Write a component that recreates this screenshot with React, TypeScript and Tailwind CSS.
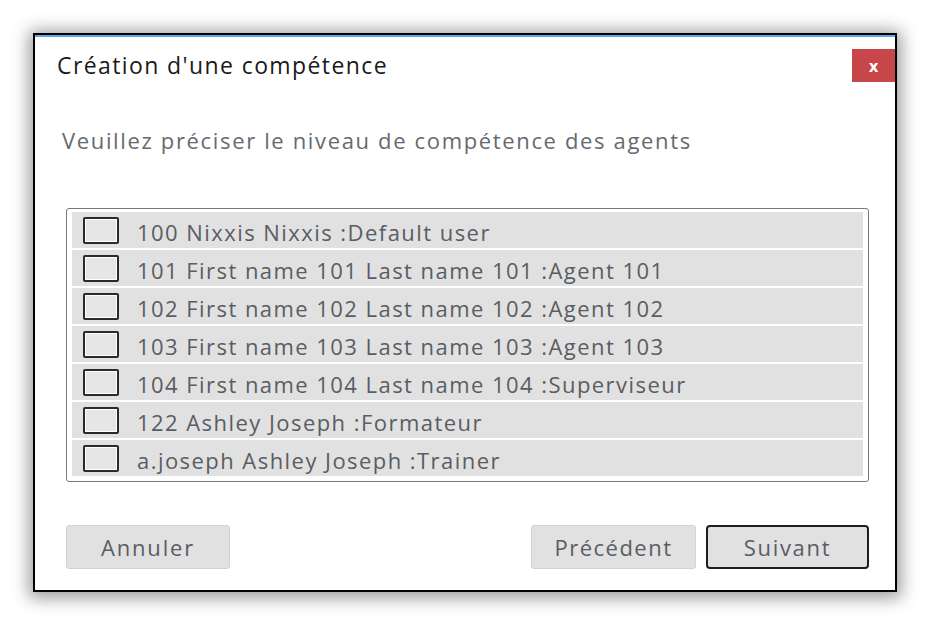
const rows = [
  "100 Nixxis Nixxis :Default user",
  "101 First name 101 Last name 101 :Agent 101",
  "102 First name 102 Last name 102 :Agent 102",
  "103 First name 103 Last name 103 :Agent 103",
  "104 First name 104 Last name 104 :Superviseur",
  "122 Ashley Joseph :Formateur",
  "a.joseph Ashley Joseph :Trainer",
];

const App = () => {
  return (
    <div className="w-[931px] h-[626px] bg-white pt-[33px] pl-[33px] font-['Open_Sans',sans-serif]">
      <div className="w-[864px] h-[559px] border-2 border-black bg-white shadow-[0_2px_16px_4px_rgba(0,0,0,0.4)] flex flex-col">
        <div className="h-[2px] bg-[#5fa6e6]" />

        <div className="mt-[12px] h-[33px] flex items-center justify-between">
          <h1 className="pl-[22px] text-[23px] tracking-[1.4px] text-[#1a1a1a]">Création d'une compétence</h1>
          <button className="w-[43px] h-[33px] bg-[#c74649] text-white text-[16px] font-bold flex items-center justify-center leading-none">
            x
          </button>
        </div>

        <p className="mt-[45px] pl-[27px] h-[26px] leading-[26px] text-[22px] tracking-[1.65px] text-[#666a70]">
          Veuillez préciser le niveau de compétence des agents
        </p>

        <div className="mt-[55px] ml-[31px] w-[803px] h-[274px] border border-[#7a7a7a] rounded-[3px] px-[5px] pt-[3px] flex flex-col gap-[2px]">
          {rows.map((r) => (
            <div key={r} className="h-[36px] bg-[#e1e1e1] flex items-center pl-[11px] gap-[18px]">
              <div className="w-[36px] h-[27px] shrink-0 border-2 border-[#2a2a2a] rounded-[2px] bg-[#e6e6e6] shadow-[inset_0_0_0_1px_#ffffff]" />
              <span className="pt-[3px] text-[22px] leading-[30px] tracking-[1.45px] text-[#5a5d63] whitespace-nowrap">{r}</span>
            </div>
          ))}
        </div>

        <div className="mt-[43px] ml-[31px] w-[803px] flex items-center">
          <button className="w-[164px] h-[44px] bg-[#e1e1e1] border border-[#d2d2d2] rounded-[3px] text-[22px] tracking-[1.8px] text-[#5a5d63]">
            Annuler
          </button>
          <button className="ml-auto w-[165px] h-[44px] bg-[#e1e1e1] border border-[#d2d2d2] rounded-[3px] text-[22px] tracking-[1.5px] text-[#5a5d63]">
            Précédent
          </button>
          <button className="ml-[10px] w-[163px] h-[44px] bg-[#e1e1e1] border-2 border-[#1e1e1e] rounded-[4px] text-[22px] tracking-[1.7px] text-[#5a5d63]">
            Suivant
          </button>
        </div>
      </div>
    </div>
  );
};

export default App;
